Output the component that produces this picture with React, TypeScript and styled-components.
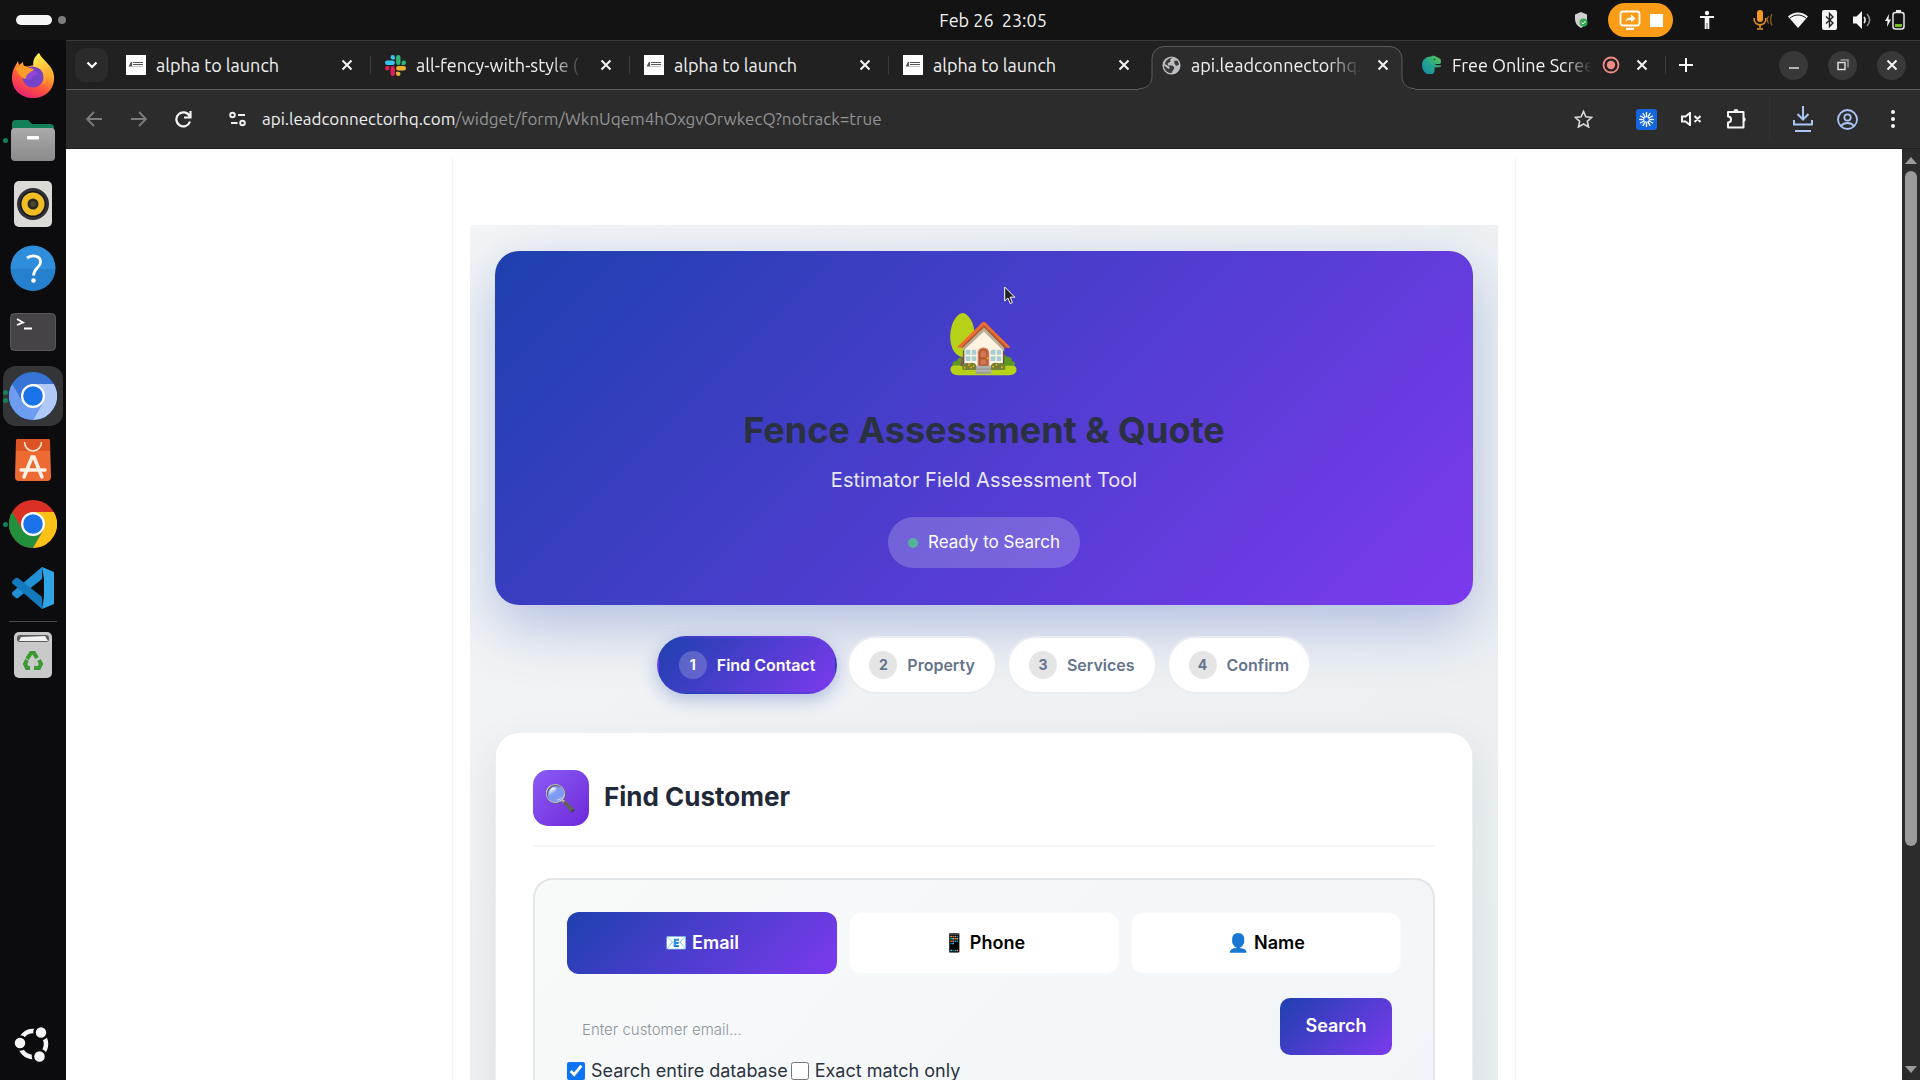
import React from "react";
import styled, { createGlobalStyle, css } from "styled-components";

const uiFont = `Ubuntu, "Noto Sans", "Open Sans", sans-serif`;
const pageFont = `Inter, "Liberation Sans", "Noto Color Emoji", sans-serif`;
const brand = "linear-gradient(135deg, #1e40af, #7c3aed)";

const GlobalStyle = createGlobalStyle`
  *, *::before, *::after { box-sizing: border-box; }
  body { margin: 0; background: #0c0c0e; overflow: hidden; }
  button, input { font: inherit; color: inherit; }
  button { border: 0; padding: 0; background: none; cursor: pointer; }
  h1, h2, p { margin: 0; }
  svg { display: block; flex: none; }
`;

/* ---------- desktop shell ---------- */

const Desktop = styled.div`
  display: grid;
  grid-template: 40px minmax(0, 1fr) / 66px minmax(0, 1fr);
  height: 100vh;
  font-family: ${uiFont};
  color: #f2f2f2;
`;

const TopBar = styled.header`
  grid-column: 1 / -1;
  display: grid;
  grid-template-columns: 66px minmax(0, 1fr);
  background: #131313;
`;

const Workspaces = styled.button`
  display: flex;
  align-items: center;
  gap: 6px;
  padding-left: 16px;
  &::before {
    content: "";
    width: 36px;
    height: 10px;
    border-radius: 5px;
    background: #f6f6f6;
  }
  &::after {
    content: "";
    width: 8px;
    height: 8px;
    border-radius: 50%;
    background: #7d7d7d;
  }
`;

const BarMain = styled.div`
  display: grid;
  grid-template-columns: 1fr auto 1fr;
  align-items: center;
`;

const Clock = styled.time`
  grid-column: 2;
  font-size: 18px;
  line-height: 40px;
  white-space: pre;
`;

const StatusArea = styled.div`
  display: flex;
  justify-content: flex-end;
  align-items: center;
  gap: 14px;
  padding-right: 15px;
`;

const SharePill = styled.button`
  display: flex;
  align-items: center;
  justify-content: center;
  gap: 9px;
  width: 65px;
  height: 34px;
  border-radius: 17px;
  background: #fb9c16;
`;

const StatusSlot = styled.span<{ $before?: number; $after?: number }>`
  display: flex;
  margin-left: ${(p) => p.$before ?? 0}px;
  margin-right: ${(p) => p.$after ?? 0}px;
`;

/* ---------- dock ---------- */

const Dock = styled.nav`
  display: flex;
  flex-direction: column;
  align-items: center;
  padding: 4px 0;
  background: #0c0c0e;
`;

const DockSlot = styled.button<{ $dots?: number; $active?: boolean }>`
  display: flex;
  align-items: center;
  justify-content: center;
  position: relative;
  flex: none;
  width: 60px;
  height: 60px;
  margin: 2px 0;
  border-radius: 13px;
  background: ${(p) => (p.$active ? "#343536" : "transparent")};
  ${(p) =>
    p.$dots &&
    css`
      &::before {
        content: "";
        position: absolute;
        left: 0;
        width: 5px;
        height: 5px;
        border-radius: 50%;
        background: #11815a;
        box-shadow: ${p.$dots === 2 ? "0 8px 0 #11815a" : "none"};
        margin-top: ${p.$dots === 2 ? "-8px" : "0"};
      }
    `}
`;

const DockRule = styled.hr`
  width: 48px;
  margin: 1px 0;
  border: 0;
  border-top: 1px solid #4a4a4c;
`;

const DockSpacer = styled.div`
  flex: 1;
`;

/* ---------- browser ---------- */

const Browser = styled.main`
  display: grid;
  grid-template-rows: 49px 59px minmax(0, 1fr);
  min-width: 0;
  background: #212122;
  border-top: 1px solid #3a3a3a;
`;

const TabStrip = styled.div`
  display: flex;
  align-items: center;
  padding-left: 9px;
  background: #212122;
  border-bottom: 1px solid #5b5c5d;
`;

const TabMenu = styled.button`
  display: flex;
  align-items: center;
  justify-content: center;
  width: 33px;
  height: 34px;
  margin-right: 4px;
  border-radius: 10px;
  background: #2b2b2c;
`;

const TabBox = styled.div<{ $rule?: boolean }>`
  display: flex;
  align-items: center;
  gap: 10px;
  flex: 0 1 259px;
  min-width: 0;
  height: 48px;
  padding: 0 18px 0 14px;
  position: relative;
  ${(p) =>
    p.$rule &&
    css`
      &::after {
        content: "";
        position: absolute;
        right: 0;
        height: 18px;
        border-right: 1px solid #3b3b3c;
      }
    `}
`;

/* outline of the selected tab with its flared feet */
const TabShape = styled.svg`
  position: absolute;
  left: -9px;
  top: 5px;
`;

const TabTitle = styled.span<{ $fade?: boolean }>`
  position: relative;
  flex: 1;
  min-width: 0;
  overflow: hidden;
  white-space: nowrap;
  font-size: 18px;
  line-height: 26px;
  ${(p) =>
    p.$fade &&
    css`
      mask-image: linear-gradient(90deg, #000 80%, transparent);
    `}
`;

const TabIcon = styled.span`
  display: flex;
  position: relative;
`;

const CloseButton = styled.button`
  position: relative;
  display: flex;
  margin-left: 6px;
`;

const NewTab = styled.button`
  display: flex;
  margin-left: 13px;
`;

const WindowButtons = styled.div`
  display: flex;
  gap: 20px;
  margin-left: auto;
  padding-right: 14px;
`;

const WindowButton = styled.button`
  display: flex;
  align-items: center;
  justify-content: center;
  width: 29px;
  height: 29px;
  border-radius: 50%;
  background: #383839;
`;

const Toolbar = styled.div`
  display: flex;
  align-items: center;
  padding: 0 5px;
  background: #2c2c2d;
  border-bottom: 1px solid #1f1f20;
`;

const ToolButton = styled.button`
  display: flex;
  align-items: center;
  justify-content: center;
  flex: none;
  width: 45px;
  height: 44px;
`;

const SiteButton = styled(ToolButton)`
  margin-left: 9px;
`;

const Address = styled.a`
  flex: 1;
  min-width: 0;
  margin-left: 2px;
  font-size: 17px;
  line-height: 26px;
  color: #939394;
  text-decoration: none;
  white-space: nowrap;
`;

const Host = styled.span`
  color: #f0f0f0;
`;

const Extensions = styled.div`
  display: flex;
  align-items: center;
  margin-left: 18px;
  padding-right: 10px;
  margin-right: 10px;
  border-right: 1px solid #333334;
`;

const Viewport = styled.div`
  display: grid;
  grid-template-columns: minmax(0, 1fr) 18px;
  overflow: hidden;
  position: relative;
`;

const Scrollbar = styled.div`
  display: flex;
  flex-direction: column;
  align-items: center;
  padding: 8px 0 7px;
  background: #2c2c2d;
`;

const ScrollTrack = styled.div`
  flex: 1;
  width: 12px;
  margin: 7px 0;
`;

const ScrollThumb = styled.div`
  height: 76%;
  border-radius: 6px;
  background: #9b9b9b;
`;

const Cursor = styled.svg`
  position: absolute;
  left: 938px;
  top: 137px;
`;

/* ---------- the form page ---------- */

const Page = styled.div`
  overflow: hidden;
  background: #fff;
  color: #1f2937;
  font-family: ${pageFont};
`;

const Frame = styled.div`
  max-width: 1064px;
  margin: 8px auto 0;
  padding: 68px 17px 0;
  border: solid #f1f2f4;
  border-width: 0 1px;
  box-shadow: 0 0 3px rgba(0, 0, 0, 0.03);
`;

const FormArea = styled.div`
  overflow: hidden;
  padding: 26px 25px 40px;
  background: linear-gradient(135deg, #f3f6f7, #e9eef1);
`;

const Hero = styled.section`
  display: flex;
  flex-direction: column;
  align-items: center;
  padding: 37px 24px;
  border-radius: 24px;
  background: ${brand};
  box-shadow: 0 20px 60px rgba(30, 64, 175, 0.3);
  text-align: center;
`;

const HeroEmoji = styled.div`
  margin-bottom: 8px;
  font-size: 60px;
  line-height: 106px;
`;

const HeroTitle = styled.h1`
  font-size: 36px;
  line-height: 56px;
  font-weight: 700;
  color: #2a3140;
`;

const HeroText = styled.p`
  font-size: 20px;
  line-height: 44px;
  color: rgba(255, 255, 255, 0.9);
`;

const Ready = styled.div`
  display: flex;
  align-items: center;
  gap: 10px;
  margin-top: 15px;
  padding: 0 20px;
  border-radius: 26px;
  background: rgba(255, 255, 255, 0.2);
  color: #fff;
  font-size: 17px;
  line-height: 51px;
  &::before {
    content: "";
    width: 10px;
    height: 10px;
    border-radius: 50%;
    background: #56b397;
  }
`;

const Steps = styled.ol`
  display: flex;
  justify-content: center;
  gap: 10px;
  margin: 31px 0 38px;
  padding: 0;
  list-style: none;
`;

const StepButton = styled.button<{ $active?: boolean }>`
  display: flex;
  align-items: center;
  gap: 10px;
  height: 58px;
  padding: 0 20px;
  border: 2px solid ${(p) => (p.$active ? "transparent" : "#e9edf1")};
  border-radius: 29px;
  background: ${(p) => (p.$active ? brand : "#fff")};
  box-shadow: ${(p) => (p.$active ? "0 6px 18px rgba(30, 64, 175, 0.3)" : "none")};
  color: ${(p) => (p.$active ? "#fff" : "#64748b")};
  font-size: 16px;
  font-weight: 600;
`;

const StepNumber = styled.span<{ $active?: boolean }>`
  width: 28px;
  border-radius: 50%;
  background: ${(p) => (p.$active ? "rgba(255,255,255,0.2)" : "#e5e5e6")};
  font-size: 14px;
  line-height: 28px;
  font-weight: 700;
`;

const Card = styled.section`
  padding: 37px;
  border: 1px solid #eceff2;
  border-radius: 24px;
  background: #fff;
  box-shadow: 0 16px 40px rgba(30, 50, 80, 0.1);
`;

const CardHead = styled.div`
  display: flex;
  align-items: center;
  gap: 15px;
  padding-bottom: 19px;
  border-bottom: 2px solid #f4f5f6;
`;

const CardIcon = styled.span`
  width: 56px;
  border-radius: 15px;
  background: linear-gradient(135deg, #8b5cf6, #6d28d9);
  font-size: 26px;
  line-height: 56px;
  text-align: center;
`;

const CardTitle = styled.h2`
  padding-bottom: 2px;
  font-size: 26px;
  line-height: 36px;
  font-weight: 700;
`;

const SearchPanel = styled.form`
  margin-top: 31px;
  padding: 32px;
  border: 2px solid #e3e6e8;
  border-radius: 20px;
  background: linear-gradient(135deg, #f8faf9, #f1f5f9);
`;

const Modes = styled.div`
  display: grid;
  grid-template-columns: repeat(3, 1fr);
  gap: 12px;
`;

const ModeButton = styled.button<{ $active?: boolean }>`
  height: 62px;
  padding-bottom: 2px;
  border: ${(p) => (p.$active ? "0" : "1px solid #f7f9fa")};
  border-radius: 12px;
  background: ${(p) => (p.$active ? brand : "#fff")};
  color: ${(p) => (p.$active ? "#fff" : "#000")};
  font-size: 18px;
  font-weight: 600;
`;

const SearchRow = styled.div`
  display: flex;
  margin-top: 24px;
  padding-right: 9px;
`;

const SearchInput = styled.input`
  flex: 1;
  min-width: 0;
  height: 57px;
  padding: 5px 15px 0;
  border: 0;
  background: transparent;
  font-size: 15px;
  font-weight: 300;
  &::placeholder {
    color: #8d949c;
    opacity: 1;
  }
`;

const SearchButton = styled.button`
  width: 112px;
  height: 57px;
  padding-bottom: 3px;
  border-radius: 10px;
  background: ${brand};
  color: #fff;
  font-size: 18px;
  font-weight: 600;
`;

const Checks = styled.div`
  display: flex;
  gap: 3px;
  padding-top: 2px;
`;

const CheckLabel = styled.label`
  display: flex;
  align-items: center;
  gap: 6px;
  font-size: 18px;
  line-height: 28px;
  color: #2c3340;
  input {
    width: 18px;
    height: 18px;
    margin: 0;
    accent-color: #0b74f5;
  }
`;

/* ---------- drawings ---------- */

const Close = () => (
  <svg width="12" height="12" viewBox="0 0 12 12" stroke="#f4f4f4" strokeWidth="2">
    <path d="M1.500 1.500l9 9M10.500 1.500l-9 9" />
  </svg>
);

const AlphaIcon = () => (
  <svg width="20" height="20" viewBox="0 0 20 20">
    <rect width="20" height="20" fill="#fff" />
    <path d="M3.500 11l2-4v4zM7 7.500h10M7 9.500h10" stroke="#555" strokeWidth="1.200" fill="#555" />
    <path d="M6 11.500h11" stroke="#aaa" strokeWidth=".7" />
  </svg>
);

const SlackIcon = () => (
  <svg width="21" height="21" viewBox="0 0 24 24">
    <path fill="#36C5F0" d="M8.800 0a2.500 2.500 0 0 0 0 5h2.500V2.500A2.500 2.500 0 0 0 8.800 0zM8.800 6.300H2.500a2.500 2.500 0 0 0 0 5h6.300a2.500 2.500 0 0 0 0-5z" />
    <path fill="#2EB67D" d="M24 8.800a2.500 2.500 0 0 0-5 0v2.500h2.500A2.500 2.500 0 0 0 24 8.800zM17.700 8.800V2.500a2.500 2.500 0 0 0-5 0v6.300a2.500 2.500 0 0 0 5 0z" />
    <path fill="#ECB22E" d="M15.200 24a2.500 2.500 0 0 0 0-5h-2.500v2.500a2.500 2.500 0 0 0 2.500 2.500zM15.200 17.700h6.300a2.500 2.500 0 0 0 0-5h-6.300a2.500 2.500 0 0 0 0 5z" />
    <path fill="#E01E5A" d="M0 15.200a2.500 2.500 0 0 0 5 0v-2.500H2.500A2.500 2.500 0 0 0 0 15.200zM6.300 15.200v6.300a2.500 2.500 0 0 0 5 0v-6.300a2.500 2.500 0 0 0-5 0z" />
  </svg>
);

const GlobeIcon = () => (
  <svg width="19" height="19" viewBox="0 0 20 20">
    <circle cx="10" cy="10" r="9.500" fill="#bdbebf" />
    <path d="M11 1.500L8.500 4 9 6 6 7.500 6.500 10H11l2 2-1 2.500L10 18C5 18 2 14 2 10l4.500 3.500 2-.5-1-2L3 8.500C4 4 7 2 11 1.500zM13 5l3.500 0L18 9l-3 1.500L13 8z" fill="#3a3b3c" />
  </svg>
);

const DinoIcon = () => (
  <svg width="21" height="20" viewBox="0 0 21 20">
    <defs>
      <linearGradient id="dino" x1="0" y1="1" x2="1" y2="0">
        <stop offset="0" stopColor="#1683a5" />
        <stop offset=".5" stopColor="#27a88d" />
        <stop offset="1" stopColor="#62c947" />
      </linearGradient>
    </defs>
    <path fill="url(#dino)" d="M1 10C1 5 5 1.500 10 1.500l2-1 3 1 4.500 2.500.5 3.500-1 1.500h-4l-1 1 6 .5-.5 1.500-6 .5V17l-2 2H6C3 17.500 1 14 1 10z" />
    <circle cx="13.500" cy="4.500" r=".8" fill="#14563f" />
  </svg>
);

const RecordIcon = () => (
  <svg width="18" height="18" viewBox="0 0 18 18">
    <circle cx="9" cy="9" r="7.500" fill="none" stroke="#ee8b87" strokeWidth="1.800" />
    <circle cx="9" cy="9" r="4.200" fill="#ee8b87" />
  </svg>
);

const FirefoxIcon = () => (
  <svg width="44" height="46" viewBox="0 0 44 46">
    <defs>
      <linearGradient id="ffBody" x1=".8" y1="0" x2=".3" y2="1">
        <stop offset="0" stopColor="#fff04a" />
        <stop offset=".35" stopColor="#ffb02c" />
        <stop offset=".65" stopColor="#ff5a39" />
        <stop offset="1" stopColor="#e91e72" />
      </linearGradient>
      <linearGradient id="ffTail" x1=".3" y1="0" x2=".7" y2="1">
        <stop offset="0" stopColor="#fff34f" />
        <stop offset="1" stopColor="#ff8b24" />
      </linearGradient>
    </defs>
    <path fill="url(#ffBody)" d="M7 8l1 4 4-3c0 3 1 4 3 5l8-2 5-12c2 6 14 12 15 23 1 14-9 22-21 22S1 37 1 25C1 18 4 13 7 8z" />
    <circle cx="22" cy="24" r="10.500" fill="#7542c8" />
    <path fill="url(#ffTail)" d="M28 0c-5 4-7 9-5 14 7 0 10 5 10 11 0 3-1 6-3 8 7-4 9-12 6-17 3 2 4 5 5 8C42 13 31 8 28 0z" />
    <path fill="#ff9b29" d="M5 15c4-3 10-3 13 0 3 0 5 1 5 2l-6 4c-2 1-1 4-3 5-4-2-8-5-9-11z" />
    <path fill="#9b4be0" opacity=".7" d="M14 26c3 2 6 0 9-3 2-2 4-1 5 0-2-6-8-7-10-2-2 1-3 3-4 5z" />
  </svg>
);

const FilesIcon = () => (
  <svg width="46" height="42" viewBox="0 0 46 42">
    <path d="M2 5a4 4 0 0 1 4-4h12l4 4h18a4 4 0 0 1 4 4v10H2z" fill="#14805a" />
    <defs>
      <linearGradient id="filesBody" x1="0" y1="0" x2="0" y2="1">
        <stop offset="0" stopColor="#a9a9a9" />
        <stop offset="1" stopColor="#8b8b8b" />
      </linearGradient>
    </defs>
    <rect x="1" y="9" width="44" height="33" rx="4" fill="url(#filesBody)" />
    <rect x="17" y="17" width="12" height="3.500" rx="1" fill="#fff" />
  </svg>
);

const SpeakerIcon = () => (
  <svg width="38" height="46" viewBox="0 0 38 46">
    <rect width="38" height="46" rx="5" fill="#dcdad6" />
    <circle cx="19" cy="23" r="16" fill="#303134" />
    <circle cx="19" cy="23" r="13" fill="#15171b" />
    <circle cx="19" cy="23" r="11.500" fill="#f0bd24" />
    <circle cx="19" cy="23" r="5.500" fill="#2b2820" />
    <circle cx="19" cy="23" r="3" fill="#4a4433" />
  </svg>
);

const HelpIcon = () => (
  <svg width="46" height="46" viewBox="0 0 46 46">
    <circle cx="23" cy="23" r="22.500" fill="#2f8edb" />
    <path d="M1 24a22 22 0 0 0 44 0z" fill="#2581cd" />
    <path d="M17 13c6-4 14-2 13.500 4.500-.3 5-7 6-7 13" fill="none" stroke="#fff" strokeWidth="2.800" />
    <circle cx="23.500" cy="35.500" r="2.300" fill="#fff" />
  </svg>
);

const TerminalIcon = () => (
  <svg width="46" height="38" viewBox="0 0 46 38">
    <rect x=".5" y=".5" width="45" height="37" rx="4" fill="#454248" stroke="#5b585e" />
    <path d="M7 6l6 3.500L7 12M14 15.500h8" fill="none" stroke="#fff" strokeWidth="1.800" />
  </svg>
);

const ChromeIcon = ({ top, left, right }: { top: string; left: string; right: string }) => (
  <svg width="48" height="48" viewBox="0 0 48 48">
    <circle cx="24" cy="24" r="24" fill={top} />
    <path d="M3.200 12A24 24 0 0 0 24 48l10.400-18L24 36 13.600 30z" fill={left} />
    <path d="M24 48A24 24 0 0 0 44.800 12H24l10.400 6v12z" fill={right} />
    <circle cx="24" cy="24" r="12" fill="#fff" />
    <circle cx="24" cy="24" r="9.800" fill="#1a73e8" />
  </svg>
);

const StoreIcon = () => (
  <svg width="36" height="42" viewBox="0 0 36 42">
    <path d="M3 0h30a2 2 0 0 1 2 2l1 36a4 4 0 0 1-4 4H4a4 4 0 0 1-4-4L1 2a2 2 0 0 1 2-2z" fill="#ee6a33" />
    <path d="M3 0h30a2 2 0 0 1 2 2v10H1V2a2 2 0 0 1 2-2z" fill="#dd5424" />
    <path d="M9.500 3a8.500 9 0 0 0 17 0" fill="none" stroke="#ffe6d8" strokeWidth="1.500" />
    <path d="M9 38l8-20h2l8 20M6 31h24" fill="none" stroke="#fff0e6" strokeWidth="3.500" strokeLinecap="round" />
  </svg>
);

const CodeIcon = () => (
  <svg width="42" height="42" viewBox="0 0 42 42">
    <path d="M30 0v12L6 31l-2 .3-4-4 .2-2z" fill="#2190d4" />
    <path d="M30 42V30L6 11l-2-.3-4 3.500.2 2z" fill="#1479bd" />
    <path d="M30 0l12 5v32l-12 5 2-12V12z" fill="#2fa5e8" />
  </svg>
);

const TrashIcon = () => (
  <svg width="38" height="46" viewBox="0 0 38 46">
    <rect width="38" height="46" rx="5" fill="#c9c9c9" />
    <rect x="3" y="3" width="32" height="7" rx="3" fill="#5b5b5b" />
    <path d="M5 9l2-4 24-1 3 5z" fill="#f3f3f3" />
    <g fill="none" stroke="#3c9a34" strokeWidth="4">
      <path d="M13 27l4-6h3l3 5" />
      <path d="M25 28l2 4-2 4h-5" />
      <path d="M16 36h-3l-2-4 2-4" />
    </g>
  </svg>
);

const UbuntuIcon = () => (
  <svg width="38" height="38" viewBox="0 0 38 38">
    <circle cx="19" cy="19" r="13" fill="none" stroke="#f5f5f5" strokeWidth="4.500" />
    <g fill="#f5f5f5" stroke="#0c0c0e" strokeWidth="2.500">
      <circle cx="6" cy="18" r="6.500" />
      <circle cx="27" cy="7.500" r="6.500" />
      <circle cx="25.500" cy="31.500" r="6.500" />
    </g>
  </svg>
);

const tabs: { title: string; icon: React.ReactNode; fade?: boolean; active?: boolean; rule?: boolean; recording?: boolean }[] = [
  { title: "alpha to launch", icon: <AlphaIcon />, rule: true },
  { title: "all-fency-with-style (", icon: <SlackIcon />, fade: true, rule: true },
  { title: "alpha to launch", icon: <AlphaIcon />, rule: true },
  { title: "alpha to launch", icon: <AlphaIcon /> },
  { title: "api.leadconnectorhq.com", icon: <GlobeIcon />, fade: true, active: true },
  { title: "Free Online Screen", icon: <DinoIcon />, fade: true, rule: true, recording: true },
];

const apps: { name: string; icon: React.ReactNode; dots?: number; active?: boolean }[] = [
  { name: "Firefox", icon: <FirefoxIcon /> },
  { name: "Files", icon: <FilesIcon />, dots: 1 },
  { name: "Rhythmbox", icon: <SpeakerIcon /> },
  { name: "Help", icon: <HelpIcon /> },
  { name: "Terminal", icon: <TerminalIcon /> },
  { name: "Chromium", icon: <ChromeIcon top="#3674d6" left="#6c9df0" right="#b0c9f8" />, dots: 2, active: true },
  { name: "App Center", icon: <StoreIcon /> },
  { name: "Chrome", icon: <ChromeIcon top="#da3025" left="#218f3b" right="#fcc117" />, dots: 1 },
  { name: "Code", icon: <CodeIcon /> },
];

const steps = ["Find Contact", "Property", "Services", "Confirm"];
const modes = ["📧 Email", "📱 Phone", "👤 Name"];

export default function App() {
  return (
    <>
      <GlobalStyle />
      <Desktop>
        <TopBar>
          <Workspaces aria-label="Workspaces" />
          <BarMain>
            <Clock>{"Feb 26  23:05"}</Clock>
            <StatusArea>
              <svg width="14" height="16" viewBox="0 0 14 16">
                <path d="M7 0l6 2.500V7c0 4-2.500 7-6 9C3 14 1 11 1 7V2.500z" fill="#cfcfcf" />
                <circle cx="9.500" cy="10.500" r="4" fill="#34a853" />
                <path d="M7.500 10.500l1.500 1.500 2.500-3" fill="none" stroke="#fff" />
              </svg>
              <StatusSlot $before={6} $after={12}>
                <SharePill aria-label="Stop screen sharing">
                  <svg width="22" height="20" viewBox="0 0 22 20" fill="none" stroke="#fff" strokeWidth="1.800">
                    <rect x="1.500" y="1.500" width="19" height="14" rx="2.500" />
                    <path d="M7 19h8" strokeWidth="2.500" />
                    <path d="M6.500 12c.3-3 2-4.500 5.500-4.500V4.500l4.500 4-4.500 4V10c-2.500 0-4 .3-5.500 2z" fill="#fff" stroke="none" />
                  </svg>
                  <svg width="13" height="13">
                    <rect width="13" height="13" fill="#fff" />
                  </svg>
                </SharePill>
              </StatusSlot>
              <StatusSlot $after={24}>
                <svg width="16" height="20" viewBox="0 0 16 20" fill="none" stroke="#f2f2f2" strokeWidth="2">
                  <circle cx="8" cy="3" r="2.200" fill="#f2f2f2" stroke="none" />
                  <path d="M1 7h14M6.700 7v12M9.300 7v12M8 7v6" />
                </svg>
              </StatusSlot>
              <svg width="21" height="20" viewBox="0 0 21 20" fill="none" stroke="#e88f1b" strokeWidth="1.700">
                <rect x="4" y="0" width="6" height="12" rx="3" fill="#f39b20" stroke="none" />
                <path d="M1 8c0 9 12 9 12 0M7 15v3M4 19h6" />
                <path d="M15.500 6c-1.500 2.500-1.500 5 0 7.500M19 4c-2 4-2 7.500 0 11.500" opacity=".6" strokeWidth="1.300" />
              </svg>
              <svg width="20" height="16" viewBox="0 0 20 16">
                <path d="M0 4.500C6-1 14-1 20 4.500L10 16z" fill="#f5f5f5" />
                <path d="M2 6C7 2 13 2 18 6" fill="none" stroke="#131313" />
              </svg>
              <svg width="15" height="20" viewBox="0 0 15 20">
                <rect width="15" height="20" rx="2" fill="#f5f5f5" />
                <path d="M4 6.500l7 6.500-3.500 3.500v-13L11 7l-7 6.500" fill="none" stroke="#222" strokeWidth="1.400" />
              </svg>
              <StatusSlot $before={2}>
                <svg width="18" height="18" viewBox="0 0 18 18" fill="none" stroke="#f2f2f2" strokeWidth="1.600">
                  <path d="M0 5.500h3.500L9 0v18l-5.500-5.500H0z" fill="#f5f5f5" stroke="none" />
                  <path d="M11 6c1.500 2 1.500 4 0 6" />
                  <path d="M14 3c3.500 4 3.500 8 0 12" opacity=".55" />
                </svg>
              </StatusSlot>
              <svg width="20" height="20" viewBox="0 0 20 20">
                <rect x="8" y="2.500" width="11" height="16.500" rx="2.500" fill="none" stroke="#e8e8e8" strokeWidth="1.500" />
                <path d="M11 1h5" stroke="#e8e8e8" strokeWidth="2" />
                <rect x="10" y="14" width="7" height="3" fill="#76b82a" />
                <path d="M4 4L0 11h2.500L2 17l4-7.500H3.500z" fill="#f2f2f2" />
              </svg>
            </StatusArea>
          </BarMain>
        </TopBar>

        <Dock>
          {apps.map((app) => (
            <DockSlot key={app.name} aria-label={app.name} $dots={app.dots} $active={app.active}>
              {app.icon}
            </DockSlot>
          ))}
          <DockRule />
          <DockSlot aria-label="Trash">
            <TrashIcon />
          </DockSlot>
          <DockSpacer />
          <DockSlot aria-label="Show apps">
            <UbuntuIcon />
          </DockSlot>
        </Dock>

        <Browser>
          <TabStrip>
            <TabMenu aria-label="Search tabs">
              <svg width="12" height="8" viewBox="0 0 12 8" fill="none" stroke="#fff" strokeWidth="2.200">
                <path d="M1.500 1.500L6 6l4.500-4.500" />
              </svg>
            </TabMenu>
            {tabs.map((tab, i) => (
              <TabBox key={i} $rule={tab.rule}>
                {tab.active && (
                  <TabShape width="276" height="45" viewBox="0 0 276 45">
                    <path
                      d="M0 42.500h1c7 0 12-5 12-12V12.500a12 12 0 0 1 12-12h226a12 12 0 0 1 12 12v18c0 7 5 12 12 12h1V45H0z"
                      fill="#2c2c2d"
                    />
                    <path
                      d="M0 42.500h1c7 0 12-5 12-12V12.500a12 12 0 0 1 12-12h226a12 12 0 0 1 12 12v18c0 7 5 12 12 12h1"
                      fill="none"
                      stroke="#5b5c5d"
                    />
                  </TabShape>
                )}
                <TabIcon>{tab.icon}</TabIcon>
                <TabTitle $fade={tab.fade}>{tab.title}</TabTitle>
                {tab.recording && <RecordIcon />}
                <CloseButton aria-label={`Close ${tab.title}`}>
                  <Close />
                </CloseButton>
              </TabBox>
            ))}
            <NewTab aria-label="New tab">
              <svg width="14" height="14" viewBox="0 0 14 14" stroke="#fff" strokeWidth="2">
                <path d="M7 0v14M0 7h14" />
              </svg>
            </NewTab>
            <WindowButtons>
              <WindowButton aria-label="Minimize">
                <svg width="12" height="12" stroke="#ddd" strokeWidth="1.500">
                  <path d="M1 9h10" />
                </svg>
              </WindowButton>
              <WindowButton aria-label="Restore">
                <svg width="12" height="12" fill="none" stroke="#ddd" strokeWidth="1.500">
                  <path d="M1 3.500h7v7H1z" />
                  <path d="M3.500 1h7.500v7.500" opacity=".6" />
                </svg>
              </WindowButton>
              <WindowButton aria-label="Close window">
                <Close />
              </WindowButton>
            </WindowButtons>
          </TabStrip>

          <Toolbar>
            <ToolButton aria-label="Back">
              <svg width="16" height="16" viewBox="0 0 16 16" fill="none" stroke="#7c7d7e" strokeWidth="1.800">
                <path d="M8 1L1 8l7 7M1 8h15" />
              </svg>
            </ToolButton>
            <ToolButton aria-label="Forward">
              <svg width="16" height="16" viewBox="0 0 16 16" fill="none" stroke="#7c7d7e" strokeWidth="1.800">
                <path d="M8 1l7 7-7 7M15 8H0" />
              </svg>
            </ToolButton>
            <ToolButton aria-label="Reload">
              <svg width="17" height="17" viewBox="0 0 17 17" fill="none" stroke="#f5f5f5" strokeWidth="2.200">
                <path d="M14.500 5A7 7 0 1 0 15 10.500M15.500 0v6.500H9" />
              </svg>
            </ToolButton>
            <SiteButton aria-label="Site information">
              <svg width="18" height="16" viewBox="0 0 18 16" fill="none" stroke="#f0f0f0" strokeWidth="1.900">
                <circle cx="3.500" cy="4" r="2.300" />
                <path d="M9 4h7M2 12h6.500" />
                <circle cx="13.500" cy="12" r="2.300" />
              </svg>
            </SiteButton>
            <Address href="#">
              <Host>api.leadconnectorhq.com</Host>/widget/form/WknUqem4hOxgvOrwkecQ?notrack=true
            </Address>
            <ToolButton aria-label="Bookmark">
              <svg width="19" height="18" viewBox="0 0 20 19" fill="none" stroke="#d6d6d6" strokeWidth="1.700">
                <path d="M10 1.500l2.500 5.700 6.200.6-4.700 4.100 1.400 6.100-5.400-3.200L4.600 18 6 11.900 1.300 7.800l6.200-.6z" />
              </svg>
            </ToolButton>
            <Extensions>
              <ToolButton aria-label="Spark extension">
                <svg width="21" height="21" viewBox="0 0 21 21">
                  <rect width="21" height="21" rx="3" fill="#1566dc" />
                  <g stroke="#fff" strokeWidth="1.300">
                    {[0, 30, 60, 90, 120, 150, 180, 210, 240, 270, 300, 330].map((a) => (
                      <path key={a} d="M10.500 7.500V3" transform={`rotate(${a} 10.500 10.500)`} />
                    ))}
                  </g>
                  <circle cx="10.500" cy="10.500" r="2.800" fill="none" stroke="#fff" />
                </svg>
              </ToolButton>
              <ToolButton aria-label="Mute">
                <svg width="21" height="14" viewBox="0 0 21 14" fill="none" stroke="#f5f5f5" strokeWidth="2">
                  <path d="M1 4.500h3.500L9 1v12L4.500 9.500H1zM13.500 4l6 6M19.500 4l-6 6" />
                </svg>
              </ToolButton>
              <ToolButton aria-label="Extensions">
                <svg width="21" height="20" viewBox="0 0 21 20">
                  <path d="M2 3h15.500v15.500H2v-5c4 0 4-6 0-6z" fill="none" stroke="#f5f5f5" strokeWidth="2" strokeLinejoin="round" />
                  <path d="M7.500 2.500a2.500 2.500 0 0 1 5 0zM18 8a2.700 2.700 0 0 1 0 5z" fill="#f5f5f5" />
                </svg>
              </ToolButton>
            </Extensions>
            <ToolButton aria-label="Downloads">
              <svg width="20" height="26" viewBox="0 0 20 26" fill="none" stroke="#a9c4f5" strokeWidth="2">
                <path d="M10 0v13M4.500 8l5.500 5.500L15.500 8M1 14v4.500h18V14M2 25h16" />
              </svg>
            </ToolButton>
            <ToolButton aria-label="Profile">
              <svg width="21" height="21" viewBox="0 0 21 21" fill="none" stroke="#a9c4f5" strokeWidth="1.800">
                <circle cx="10.500" cy="10.500" r="9.500" />
                <circle cx="10.500" cy="8.500" r="3.200" />
                <path d="M4 17c3-4 10-4 13 0" />
              </svg>
            </ToolButton>
            <ToolButton aria-label="Menu">
              <svg width="4" height="18" viewBox="0 0 4 18" fill="#f5f5f5">
                <circle cx="2" cy="2" r="2" />
                <circle cx="2" cy="9" r="2" />
                <circle cx="2" cy="16" r="2" />
              </svg>
            </ToolButton>
          </Toolbar>

          <Viewport>
            <Page>
              <Frame>
                <FormArea>
                  <Hero>
                    <HeroEmoji>🏡</HeroEmoji>
                    <HeroTitle>Fence Assessment &amp; Quote</HeroTitle>
                    <HeroText>Estimator Field Assessment Tool</HeroText>
                    <Ready>Ready to Search</Ready>
                  </Hero>
                  <Steps>
                    {steps.map((step, i) => (
                      <li key={step}>
                        <StepButton $active={i === 0}>
                          <StepNumber $active={i === 0}>{i + 1}</StepNumber>
                          {step}
                        </StepButton>
                      </li>
                    ))}
                  </Steps>
                  <Card>
                    <CardHead>
                      <CardIcon>🔍</CardIcon>
                      <CardTitle>Find Customer</CardTitle>
                    </CardHead>
                    <SearchPanel onSubmit={(e) => e.preventDefault()}>
                      <Modes>
                        {modes.map((mode, i) => (
                          <ModeButton type="button" key={mode} $active={i === 0}>
                            {mode}
                          </ModeButton>
                        ))}
                      </Modes>
                      <SearchRow>
                        <SearchInput type="email" aria-label="Customer email" placeholder="Enter customer email..." />
                        <SearchButton type="submit">Search</SearchButton>
                      </SearchRow>
                      <Checks>
                        <CheckLabel>
                          <input type="checkbox" defaultChecked />
                          Search entire database
                        </CheckLabel>
                        <CheckLabel>
                          <input type="checkbox" />
                          Exact match only
                        </CheckLabel>
                      </Checks>
                    </SearchPanel>
                  </Card>
                </FormArea>
              </Frame>
            </Page>
            <Scrollbar>
              <svg width="12" height="7" viewBox="0 0 12 7" fill="#9b9b9b">
                <path d="M6 0l6 7H0z" />
              </svg>
              <ScrollTrack>
                <ScrollThumb />
              </ScrollTrack>
              <svg width="12" height="7" viewBox="0 0 12 7" fill="#9b9b9b">
                <path d="M0 0h12L6 7z" />
              </svg>
            </Scrollbar>
            <Cursor width="12" height="19" viewBox="0 0 12 19">
              <path d="M.7 1v14l3.200-3 2.300 5.500 2.200-1L6.200 11.200h4.600z" fill="#222" stroke="#fff" />
            </Cursor>
          </Viewport>
        </Browser>
      </Desktop>
    </>
  );
}
